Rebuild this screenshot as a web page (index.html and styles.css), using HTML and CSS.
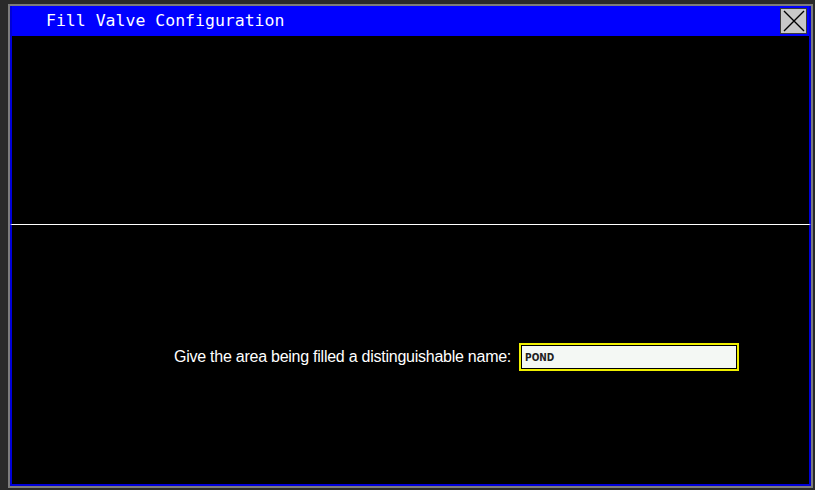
FILE: index.html
```html
<!DOCTYPE html>
<html lang="en">
<head>
  <meta charset="UTF-8" />
  <title>Fill Valve Configuration</title>
  <link rel="stylesheet" href="styles.css">
</head>
<body>

<div class="window">
  <div class="titlebar">
    <span class="title">Fill Valve Configuration</span>
    <button class="close" aria-label="Close">
      <svg width="22" height="22" viewBox="0 0 22 22"><path d="M1 1 L21 21 M21 1 L1 21" stroke="#000" stroke-width="1.4" fill="none"/></svg>
    </button>
  </div>

  <div class="pane top"></div>

  <div class="pane bottom">
    <div class="field-row">
      <label for="areaName">Give the area being filled a distinguishable name:</label>
      <div class="input-wrap"><input id="areaName" type="text" value="POND"></div>
    </div>
  </div>
</div>

</body>
</html>
```

FILE: styles.css
```css
* { margin: 0; padding: 0; box-sizing: border-box; }

body {
  background: #2a2a2a;
  width: 815px;
  height: 490px;
  overflow: hidden;
  padding: 4px 2px 2px 8px;
}

.window {
  width: 805px;
  height: 484px;
  border: 2px solid #7c7c7c;
  background: #000;
  display: flex;
  flex-direction: column;
}

.window > * { border-left: 2px solid #0000d8; border-right: 2px solid #0000d8; }

.titlebar {
  height: 30px;
  background: #0000ff;
  display: flex;
  align-items: center;
  justify-content: space-between;
  padding: 0 2px 0 34px;
}

.title {
  font-family: 'DejaVu Sans Mono', monospace;
  font-size: 16.5px;
  color: #fff;
  margin-top: -1px;
}

.close {
  width: 27px;
  height: 26px;
  background: #c8c8c8;
  border: 1px solid #3a3a3a;
  display: flex;
  align-items: center;
  justify-content: center;
}

.pane.top {
  height: 189px;
  border-bottom: 1px solid #fff;
}

.pane.bottom {
  flex: 1;
  border-bottom: 2px solid #0000d8;
  padding: 118px 0 0 162px;
}

.field-row {
  display: flex;
  align-items: center;
  gap: 8px;
  height: 28px;
}

.field-row label {
  font-family: 'Liberation Sans', Arial, sans-serif;
  font-size: 16px;
  color: #fff;
  letter-spacing: -0.25px;
}

.input-wrap {
  width: 220px;
  height: 28px;
  border: 2px solid #f0f000;
  background: #f0f000;
}

.input-wrap input {
  width: 100%;
  height: 100%;
  border: 1px solid #000;
  background: #f4f8f4;
  font-family: 'DejaVu Sans Condensed', 'DejaVu Sans', sans-serif;
  font-size: 10px;
  font-weight: 600;
  color: #222;
  padding: 0 3px;
  outline: none;
}
```
